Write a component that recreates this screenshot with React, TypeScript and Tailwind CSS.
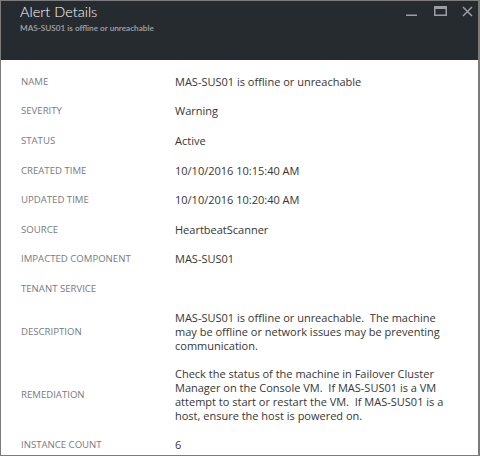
import React from "react";

type Row = {
  label: string;
  value: string;
};

const rows: Row[] = [
  { label: "NAME", value: "MAS-SUS01 is offline or unreachable" },
  { label: "SEVERITY", value: "Warning" },
  { label: "STATUS", value: "Active" },
  { label: "CREATED TIME", value: "10/10/2016 10:15:40 AM" },
  { label: "UPDATED TIME", value: "10/10/2016 10:20:40 AM" },
  { label: "SOURCE", value: "HeartbeatScanner" },
  { label: "IMPACTED COMPONENT", value: "MAS-SUS01" },
  { label: "TENANT SERVICE", value: "" },
  {
    label: "DESCRIPTION",
    value:
      "MAS-SUS01 is offline or unreachable.\u00a0 The machine may be offline or network issues may be preventing communication.",
  },
  {
    label: "REMEDIATION",
    value:
      "Check the status of the machine in Failover Cluster Manager on the Console VM.\u00a0 If MAS-SUS01 is a VM attempt to start or restart the VM.\u00a0 If MAS-SUS01 is a host, ensure the host is powered on.",
  },
  { label: "INSTANCE COUNT", value: "6" },
];

const App: React.FC = () => {
  return (
    <div className="w-[480px] h-[457px] bg-white">
      <div className="w-[480px] h-[456px] border border-r-2 border-[#7b7b7b] flex flex-col overflow-hidden font-['Open_Sans',sans-serif]">
        {/* header */}
        <div className="h-[59px] shrink-0 bg-[#262b30] flex justify-between pl-[19px] pr-[5px]">
          <div className="pt-[1px]">
            <div className="text-[14.5px] leading-[20px] font-light text-white font-['Lato',sans-serif]">
              Alert Details
            </div>
            <div className="text-[8.2px] leading-[12px] font-semibold text-[#a3a7ab] font-['Lato',sans-serif]">
              MAS-SUS01 is offline or unreachable
            </div>
          </div>
          <div className="flex items-start pt-[5px]">
            <svg width="11" height="11" viewBox="0 0 11 11" className="mt-[1px] mr-[17px]">
              <rect x="0" y="7.5" width="11" height="1.5" fill="#9a9ea3" />
            </svg>
            <svg width="13" height="10" viewBox="0 0 13 10" className="mr-[15px]">
              <rect x="0.75" y="0.75" width="11.5" height="8.5" fill="none" stroke="#9a9ea3" strokeWidth="1.5" />
              <rect x="0" y="0" width="13" height="3" fill="#9a9ea3" />
            </svg>
            <svg width="11" height="11" viewBox="0 0 11 11">
              <path d="M1 1 L10 10 M10 1 L1 10" stroke="#9a9ea3" strokeWidth="1.5" />
            </svg>
          </div>
        </div>

        {/* details */}
        <div className="pt-[7px]">
          {rows.map((r) => (
            <div key={r.label} className="flex items-center min-h-[29.6px] py-[7px]">
              <div className="w-[174px] shrink-0 pl-[20px] text-[9.6px] leading-[14px] text-[#777b7f]">
                {r.label}
              </div>
              <div className="w-[270px] text-[11px] leading-[14px] text-[#363636]">{r.value}</div>
            </div>
          ))}
        </div>
      </div>
    </div>
  );
};

export default App;
